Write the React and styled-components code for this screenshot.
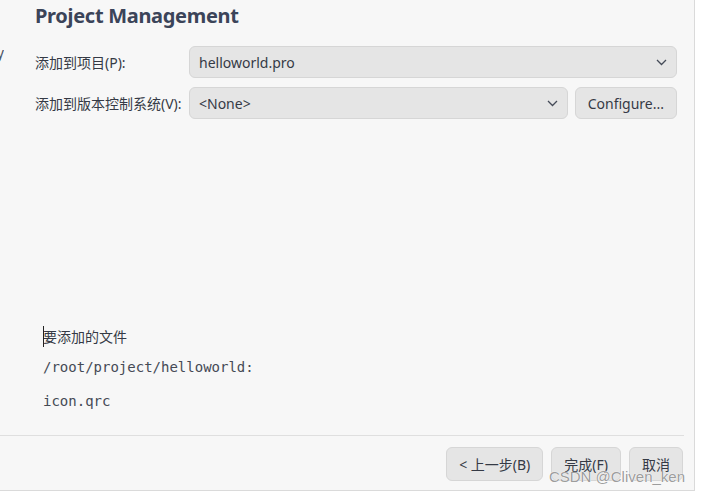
import React from "react";
import styled, { createGlobalStyle } from "styled-components";

const GlobalStyle = createGlobalStyle`
  html, body {
    margin: 0;
    padding: 0;
    background: #ffffff;
  }
  body {
    font-family: "Noto Sans", "Noto Sans CJK SC", sans-serif;
    font-size: 14px;
    color: #353a45;
  }
`;

const Window = styled.div`
  position: relative;
  display: flex;
  flex-direction: column;
  width: 695px;
  height: 491px;
  background-color: #f7f7f7;
  border-right: 1px solid #dadada;
  border-bottom: 1px solid #dadada;
  box-sizing: border-box;
`;

const Body = styled.div`
  display: flex;
  flex: 1;
  min-height: 0;
`;

const Side = styled.div`
  width: 4px;
  overflow: hidden;
  padding-top: 43px;
  white-space: nowrap;
  direction: rtl;
  color: #4a5163;
`;

const Main = styled.div`
  display: flex;
  flex-direction: column;
  flex: 1;
  padding: 0 17px 0 31px;
`;

const Title = styled.h1`
  margin: 0;
  padding-top: 2px;
  font-size: 20px;
  line-height: 28px;
  font-weight: 700;
  letter-spacing: -0.3px;
  color: #3b4459;
`;

const Form = styled.div`
  display: grid;
  grid-template-columns: 147px 1fr auto;
  column-gap: 7px;
  row-gap: 9px;
  margin-top: 16px;
`;

const Label = styled.label`
  display: flex;
  align-items: center;
  white-space: nowrap;
  color: #353a45;
`;

const Combo = styled.div`
  grid-column: ${(props) => (props.wide ? "2 / 4" : "2 / 3")};
  display: flex;
  align-items: center;
  justify-content: space-between;
  height: 32px;
  padding: 0 9px 0 9px;
  background-color: #e5e5e5;
  border: 1px solid #d6d6d6;
  border-radius: 6px;
  box-sizing: border-box;
  color: #353a45;
`;

const Chevron = () => (
  <svg width="11" height="7" viewBox="0 0 11 7">
    <path d="M1 1 L5.5 5.5 L10 1" fill="none" stroke="#454b58" strokeWidth="1.3" />
  </svg>
);

const Button = styled.button`
  height: ${(props) => (props.tall ? "34px" : "32px")};
  padding: 0 12px;
  font-family: inherit;
  font-size: 14px;
  color: #353a45;
  background-color: #e5e5e5;
  border: 1px solid #d6d6d6;
  border-radius: 6px;
`;

const Files = styled.div`
  margin-top: auto;
  padding: 0 0 24px 8px;
`;

const FilesHeading = styled.div`
  position: relative;
  height: 20px;
  line-height: 20px;
  margin-bottom: 10px;
  &::before {
    content: "";
    position: absolute;
    left: 0;
    top: -1px;
    width: 1px;
    height: 21px;
    background-color: #222;
  }
`;

const Mono = styled.div`
  font-family: "DejaVu Sans Mono", monospace;
  font-size: 14px;
  line-height: 20px;
  color: #454a55;
  margin-bottom: ${(props) => (props.gap ? "14px" : "0")};
`;

const Footer = styled.div`
  display: flex;
  justify-content: flex-end;
  gap: 8px;
  height: 55px;
  margin-right: 10px;
  padding: 11px 1px 0 0;
  border-top: 1px solid #dfdfdf;
  box-sizing: border-box;
`;

const Watermark = styled.div`
  position: absolute;
  right: 9px;
  bottom: 5px;
  font-family: "Liberation Sans", sans-serif;
  font-size: 15px;
  color: rgba(130, 130, 130, 0.8);
  text-shadow: 0 0 1px #fff, 0 0 1px #fff;
  pointer-events: none;
`;

const App = () => {
  return (
    <>
      <GlobalStyle />
      <Window>
        <Body>
          <Side>Summary</Side>
          <Main>
            <Title>Project Management</Title>
            <Form>
              <Label>添加到项目(P):</Label>
              <Combo wide>
                helloworld.pro
                <Chevron />
              </Combo>
              <Label>添加到版本控制系统(V):</Label>
              <Combo>
                &lt;None&gt;
                <Chevron />
              </Combo>
              <Button>Configure...</Button>
            </Form>
            <Files>
              <FilesHeading>要添加的文件</FilesHeading>
              <Mono gap>/root/project/helloworld:</Mono>
              <Mono>icon.qrc</Mono>
            </Files>
          </Main>
        </Body>
        <Footer>
          <Button tall>&lt; 上一步(B)</Button>
          <Button tall>完成(F)</Button>
          <Button tall>取消</Button>
        </Footer>
        <Watermark>CSDN @Cliven_ken</Watermark>
      </Window>
    </>
  );
};

export default App;
